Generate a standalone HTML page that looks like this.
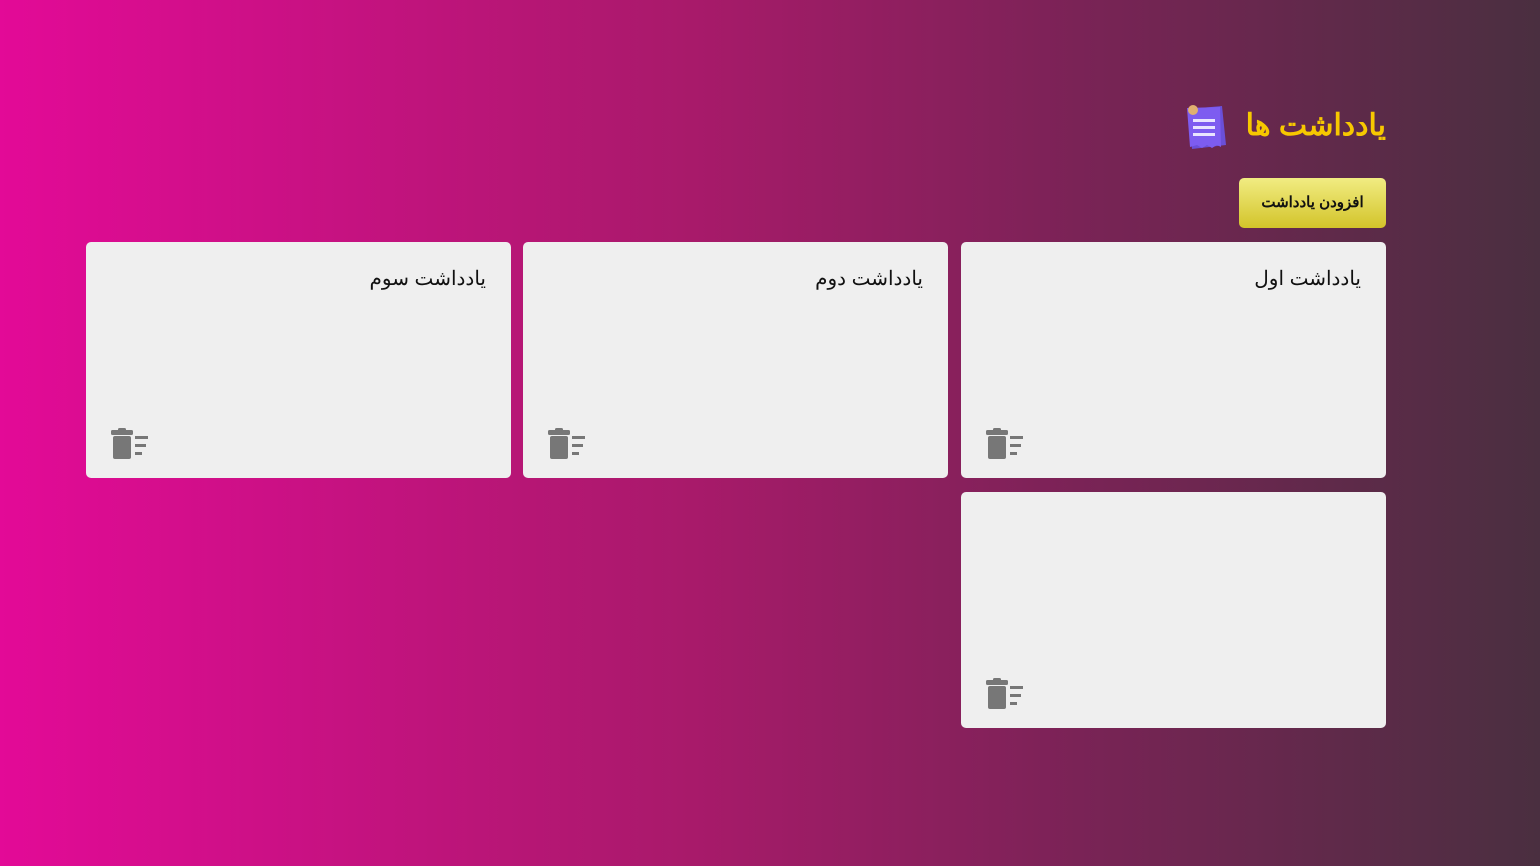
<!DOCTYPE html>
<html><head><meta charset="utf-8"><style>
*{margin:0;padding:0;box-sizing:border-box}
body{width:1540px;height:866px;overflow:hidden;background:linear-gradient(90deg,#e30a97 0%,#a81a6a 45%,#7a2356 70%,#4a2f40 100%);font-family:"Liberation Sans","Noto Sans CJK SC",sans-serif;position:relative}
.h{position:absolute;right:154px;top:104px;height:44px;line-height:44px;color:#f7c800;font-size:30px;font-weight:bold;direction:rtl}
.ic{position:absolute;left:1184px;top:103px}
.btn{position:absolute;left:1239px;top:178px;width:147px;height:50px;border-radius:5px;background:linear-gradient(#f1ec82,#d3c42a);color:#111;font-size:15px;font-weight:bold;text-align:center;line-height:50px;direction:rtl}
.c{position:absolute;width:425px;height:236px;background:#efefef;border-radius:5px}
.c .t{position:absolute;right:25px;top:24px;font-size:20px;font-weight:500;direction:rtl;color:#111}
.c svg{position:absolute;left:25px;top:186px}
</style></head><body>
<div class="h">یادداشت ها</div>
<svg class="ic" width="44" height="48" viewBox="0 0 44 48"><path d="M5 6 L38 3 L42 42 L8 46 Z" fill="#6a4fd8"/><path d="M3 5 L36 4 L37 44 L33 42 L28 45 L23 42 L18 45 L13 42 L6 44 Z" fill="#7d5cf0"/><rect x="9" y="16" width="22" height="3" fill="#e8e4ff"/><rect x="9" y="23" width="22" height="3" fill="#e8e4ff"/><rect x="9" y="30" width="22" height="3" fill="#e8e4ff"/><circle cx="9" cy="7" r="5" fill="#e0b070"/></svg>
<div class="btn">افزودن یادداشت</div>
<div class="c" style="left:86px;top:242px"><div class="t">یادداشت سوم</div><svg width="40" height="34"><rect x="7" y="0" width="8" height="4" rx="1.5" fill="#777"/><rect x="0" y="2" width="22" height="5" rx="1.5" fill="#777"/><rect x="2" y="8" width="18" height="23" rx="2" fill="#777"/><rect x="24" y="8" width="13" height="3" fill="#777"/><rect x="24" y="16" width="11" height="3" fill="#777"/><rect x="24" y="24" width="7" height="3" fill="#777"/></svg></div>
<div class="c" style="left:523px;top:242px"><div class="t">یادداشت دوم</div><svg width="40" height="34"><rect x="7" y="0" width="8" height="4" rx="1.5" fill="#777"/><rect x="0" y="2" width="22" height="5" rx="1.5" fill="#777"/><rect x="2" y="8" width="18" height="23" rx="2" fill="#777"/><rect x="24" y="8" width="13" height="3" fill="#777"/><rect x="24" y="16" width="11" height="3" fill="#777"/><rect x="24" y="24" width="7" height="3" fill="#777"/></svg></div>
<div class="c" style="left:961px;top:242px"><div class="t">یادداشت اول</div><svg width="40" height="34"><rect x="7" y="0" width="8" height="4" rx="1.5" fill="#777"/><rect x="0" y="2" width="22" height="5" rx="1.5" fill="#777"/><rect x="2" y="8" width="18" height="23" rx="2" fill="#777"/><rect x="24" y="8" width="13" height="3" fill="#777"/><rect x="24" y="16" width="11" height="3" fill="#777"/><rect x="24" y="24" width="7" height="3" fill="#777"/></svg></div>
<div class="c" style="left:961px;top:492px"><svg width="40" height="34"><rect x="7" y="0" width="8" height="4" rx="1.5" fill="#777"/><rect x="0" y="2" width="22" height="5" rx="1.5" fill="#777"/><rect x="2" y="8" width="18" height="23" rx="2" fill="#777"/><rect x="24" y="8" width="13" height="3" fill="#777"/><rect x="24" y="16" width="11" height="3" fill="#777"/><rect x="24" y="24" width="7" height="3" fill="#777"/></svg></div>
</body></html>
